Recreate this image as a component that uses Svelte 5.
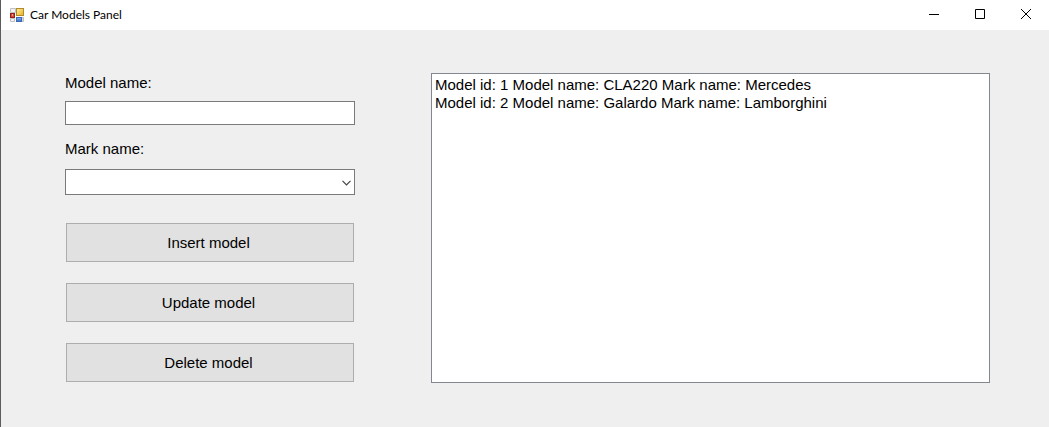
<script>
  let modelName = $state('');
  let markName = $state('');
  let selected = $state([]);
  const marks = ['Mercedes', 'Lamborghini'];
  const models = [
    { id: 1, name: 'CLA220', mark: 'Mercedes' },
    { id: 2, name: 'Galardo', mark: 'Lamborghini' }
  ];
  const actions = ['Insert model', 'Update model', 'Delete model'];
</script>

<div class="window">
  <header class="titlebar">
    <svg class="app-icon" width="14" height="14" viewBox="0 0 14 14" aria-hidden="true">
      <defs>
        <linearGradient id="gold" x1="0" y1="0" x2="1" y2="1">
          <stop offset="0" stop-color="#fff0a0" />
          <stop offset="1" stop-color="#e8b020" />
        </linearGradient>
        <linearGradient id="blue" x1="0" y1="0" x2="0" y2="1">
          <stop offset="0" stop-color="#8fb8f4" />
          <stop offset="1" stop-color="#3268c8" />
        </linearGradient>
      </defs>
      <path d="M.5.5h5v4h-5zM.5 10.5h4v3h-4zM12 9.5h1.5v4H12z" fill="#f0f0f0" stroke="#bfc0c4" />
      <rect x="6.5" y=".5" width="7" height="7" fill="url(#gold)" stroke="#b28a28" />
      <rect x=".5" y="5.5" width="4" height="4" fill="#d04a38" stroke="#962018" />
      <rect x="2" y="6" width="1" height="2" fill="#f09a80" />
      <rect x="6.5" y="9.5" width="5" height="4" fill="url(#blue)" stroke="#3c68b4" />
    </svg>
    <h1>Car Models Panel</h1>
    <div class="controls">
      <button type="button" aria-label="Minimize">
        <svg width="10" height="10" viewBox="0 0 10 10"><path d="M0 5.5h10" /></svg>
      </button>
      <button type="button" aria-label="Maximize">
        <svg width="10" height="10" viewBox="0 0 10 10"><path d="M.5.5h9v9h-9z" /></svg>
      </button>
      <button type="button" aria-label="Close">
        <svg width="10" height="10" viewBox="0 0 10 10"><path d="M0 0l10 10M10 0L0 10" /></svg>
      </button>
    </div>
  </header>

  <main>
    <form onsubmit={(e) => e.preventDefault()}>
      <label for="model">Model name:</label>
      <input id="model" type="text" bind:value={modelName} />
      <label for="mark" class="second">Mark name:</label>
      <div class="combo">
        <select id="mark" bind:value={markName}>
          <option value=""></option>
          {#each marks as mark}<option>{mark}</option>{/each}
        </select>
        <svg width="9" height="6" viewBox="0 0 9 6" aria-hidden="true"><path d="M.5.8l4 4 4-4" /></svg>
      </div>
      <div class="actions">
        {#each actions as action}<button type="button">{action}</button>{/each}
      </div>
    </form>
    <select class="list" multiple aria-label="Models" bind:value={selected}>
      {#each models as m}
        <option value={m.id}>Model id: {m.id} Model name: {m.name} Mark name: {m.mark}</option>
      {/each}
    </select>
  </main>
</div>

<style>
  :global(body) { margin: 0; background: #efefef; }
  .window {
    box-sizing: border-box;
    min-height: 100vh;
    display: flex;
    flex-direction: column;
    border-left: 1px solid #5c5c5c;
    background: #efefef;
    color: #000;
    font: 15px/20px "Liberation Sans", Arial, sans-serif;
  }
  .titlebar {
    display: flex;
    align-items: center;
    height: 30px;
    padding-left: 9px;
    background: #fff;
  }
  .app-icon { flex: none; }
  h1 {
    margin: 0 auto 0 6px;
    font: 12px/16px Lato, "Open Sans", sans-serif;
  }
  .controls { display: flex; align-self: stretch; }
  .controls button {
    width: 46px;
    padding: 0 0 2px;
    border: 0;
    background: none;
    display: grid;
    place-items: center;
  }
  .controls svg { fill: none; stroke: #000; }
  main {
    flex: 1;
    display: grid;
    grid-template-columns: minmax(0, 290fr) minmax(0, 559fr);
    gap: 76px;
    padding: 43px 59px 44px 64px;
  }
  form { display: flex; flex-direction: column; }
  label { margin-bottom: 8px; }
  .second { margin: 14px 0 10px; }
  input, select, .actions button {
    box-sizing: border-box;
    margin: 0;
    border-radius: 0;
    font: inherit;
    color: inherit;
  }
  input {
    width: 100%;
    height: 24px;
    padding: 0 3px;
    border: 1px solid #7a7a7a;
    background: #fff;
  }
  .combo { display: grid; align-items: center; }
  .combo select {
    grid-area: 1 / 1;
    width: 100%;
    height: 26px;
    padding: 0 20px 0 3px;
    appearance: none;
    border: 1px solid #7a7a7a;
    background: #fff;
  }
  .combo svg {
    grid-area: 1 / 1;
    justify-self: end;
    margin: 2px 4px 0 0;
    fill: none;
    stroke: #444;
    stroke-width: 1.2;
    pointer-events: none;
  }
  .actions {
    display: flex;
    flex-direction: column;
    gap: 21px;
    padding: 28px 1px 0;
  }
  .actions button {
    height: 39px;
    padding: 0 3px 0 0;
    border: 1px solid #adadad;
    background: #e1e1e1;
  }
  .list {
    width: 100%;
    height: 100%;
    padding: 2px 3px;
    border: 1px solid #828790;
    background: #fff;
    overflow: auto;
    outline: 0;
  }
  .list option {
    min-height: 0;
    padding: 0 0 1px;
    line-height: 18px;
  }
</style>
